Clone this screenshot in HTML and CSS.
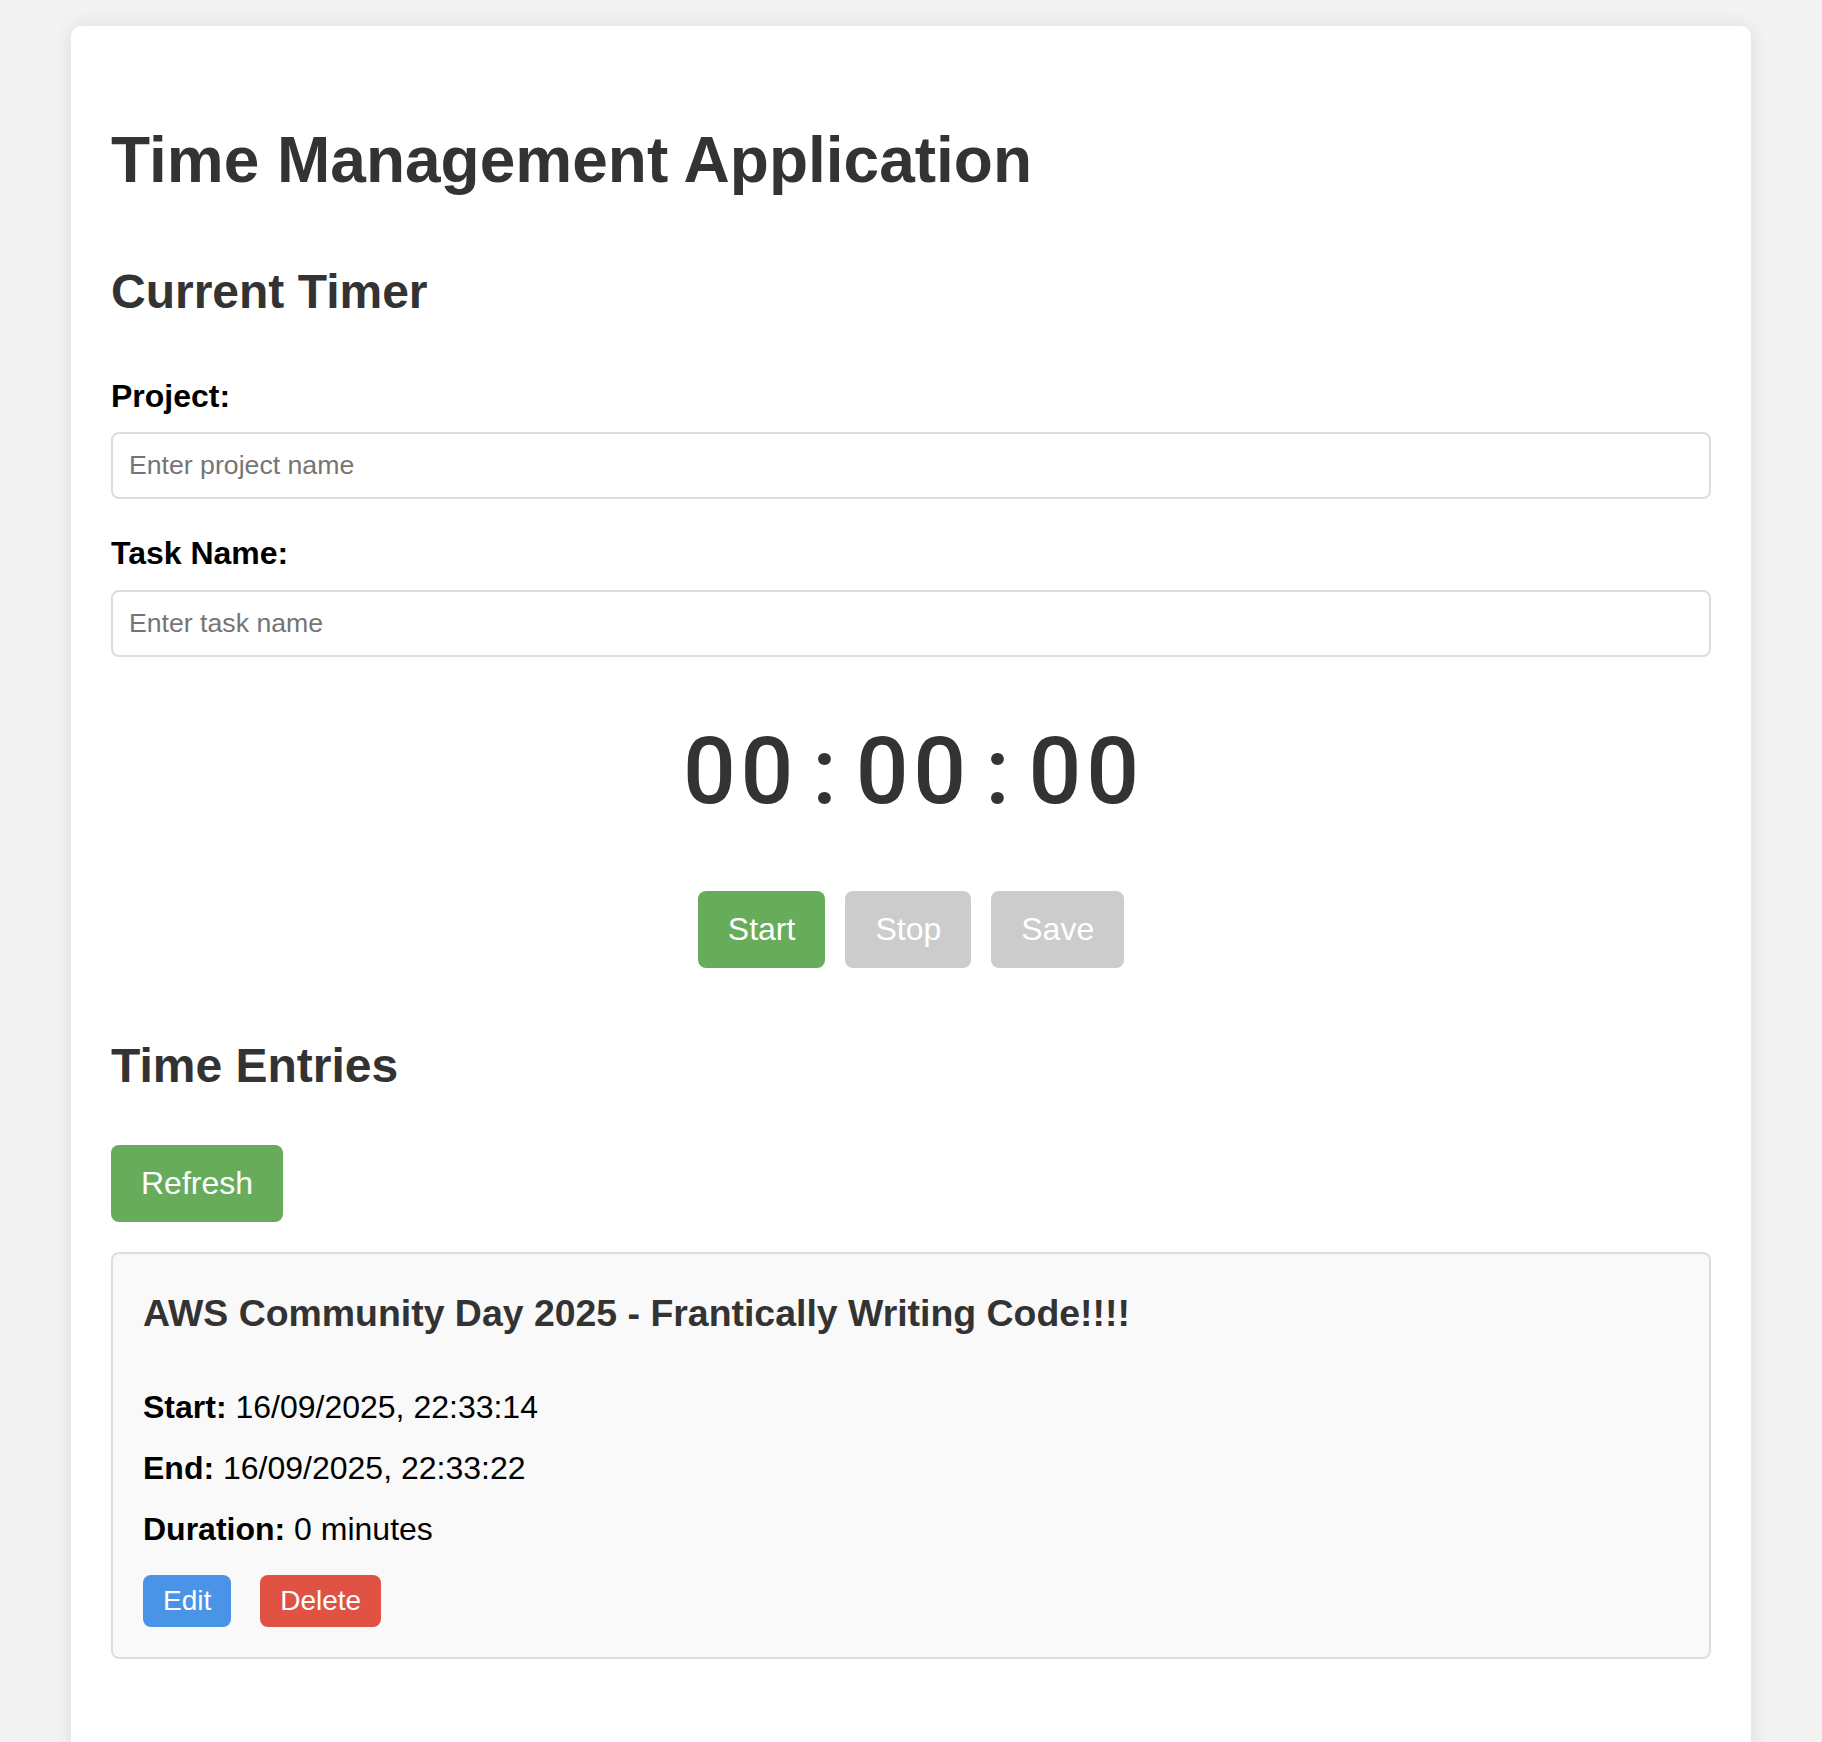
FILE: index.html
```html
<!DOCTYPE html>
<html lang="en">
<head>
<meta charset="utf-8">
<title>Time Management Application</title>
<link rel="stylesheet" href="styles.css">
</head>
<body>
<div class="container">
  <h1>Time Management Application</h1>

  <section class="timer-section">
    <h2>Current Timer</h2>
    <div class="form-group">
      <label for="project">Project:</label>
      <input id="project" type="text" placeholder="Enter project name">
    </div>
    <div class="form-group">
      <label for="task">Task Name:</label>
      <input id="task" type="text" placeholder="Enter task name">
    </div>
    <div class="timer"><span>0</span><span>0</span><span>:</span><span>0</span><span>0</span><span>:</span><span>0</span><span>0</span></div>
    <div class="controls">
      <button class="btn btn-green">Start</button>
      <button class="btn btn-disabled" disabled>Stop</button>
      <button class="btn btn-disabled" disabled>Save</button>
    </div>
  </section>

  <section class="entries-section">
    <h2>Time Entries</h2>
    <button class="btn btn-green refresh">Refresh</button>
    <div class="entry">
      <h3>AWS Community Day 2025 - Frantically Writing Code!!!!</h3>
      <p><strong>Start:</strong> 16/09/2025, 22:33:14</p>
      <p><strong>End:</strong> 16/09/2025, 22:33:22</p>
      <p><strong>Duration:</strong> 0 minutes</p>
      <div class="entry-actions">
        <button class="btn-small btn-blue">Edit</button>
        <button class="btn-small btn-red">Delete</button>
      </div>
    </div>
  </section>
</div>
</body>
</html>
```

FILE: styles.css
```css
* {
  box-sizing: border-box;
}

body {
  margin: 0;
  padding: 26px 0 0;
  background: #f3f3f3;
  font-family: "Liberation Sans", Arial, Helvetica, sans-serif;
  font-size: 32px;
  line-height: 1.6;
  color: #000;
}

.container {
  max-width: 1680px;
  margin: 0 auto;
  padding: 40px 40px 120px;
  background: #fff;
  border-radius: 10px;
  box-shadow: 0 0 20px rgba(0, 0, 0, 0.1);
}

h1 {
  font-size: 64px;
  font-weight: bold;
  color: #333;
  margin: 43px 0;
}

h2 {
  font-size: 48px;
  font-weight: bold;
  color: #333;
  margin: 40px 0;
}

.form-group {
  margin-bottom: 29px;
}

label {
  display: block;
  font-weight: bold;
  margin-bottom: 10px;
}

input {
  display: block;
  width: 100%;
  padding: 16px;
  border: 2px solid #ddd;
  border-radius: 8px;
  font-family: "Liberation Sans", Arial, sans-serif;
  font-size: 26.67px;
  line-height: normal;
  color: #333;
  background: #fff;
}

input::placeholder {
  color: #757575;
}

.timer {
  display: flex;
  justify-content: center;
  margin: 38px 0 43px;
  font-family: Roboto, "Liberation Sans", sans-serif;
  font-weight: 500;
  font-size: 93px;
  line-height: 1.65;
  color: #333;
}

.timer span {
  width: 57.6px;
  text-align: center;
}

.controls {
  display: flex;
  justify-content: center;
  gap: 20px;
  margin-bottom: 60px;
}

.btn {
  border: none;
  border-radius: 8px;
  padding: 20px 30px;
  font-family: "Liberation Sans", Arial, sans-serif;
  font-size: 32px;
  line-height: normal;
  color: #fff;
  cursor: pointer;
}

.btn-green {
  background: #67ac5b;
}

.btn-disabled {
  background: #cccccc;
  color: #fff;
  cursor: not-allowed;
}

.refresh {
  display: block;
  margin-bottom: 30px;
}

.entry {
  background: #f9f9f9;
  border: 2px solid #ddd;
  border-radius: 8px;
  padding: 30px;
}

.entry h3 {
  font-size: 37.44px;
  font-weight: bold;
  color: #333;
  margin: 0 0 38px;
}

.entry p {
  margin: 10px 0;
}

.entry-actions {
  display: flex;
  gap: 29px;
  margin-top: 20px;
}

.btn-small {
  border: none;
  border-radius: 8px;
  padding: 10px 20px;
  font-family: "Liberation Sans", Arial, sans-serif;
  font-size: 28px;
  line-height: normal;
  color: #fff;
  cursor: pointer;
}

.btn-blue {
  background: #4a94e8;
}

.btn-red {
  background: #e05243;
}
```
